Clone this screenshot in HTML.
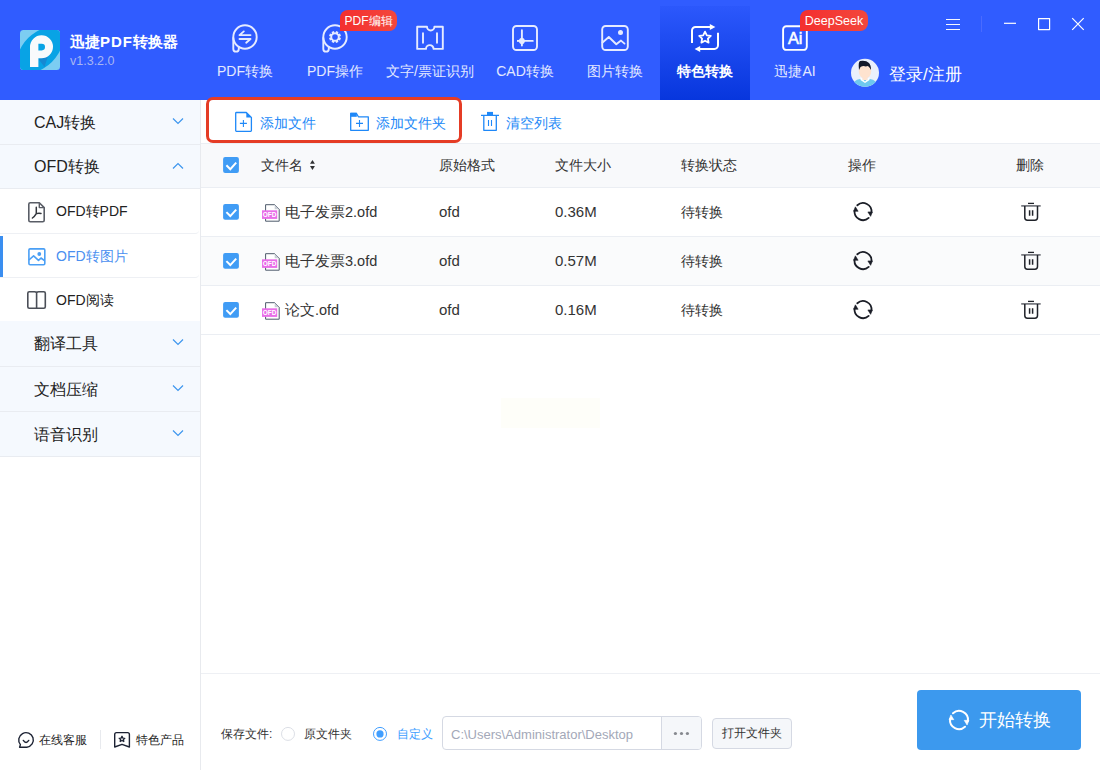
<!DOCTYPE html>
<html><head><meta charset="utf-8">
<style>
*{margin:0;padding:0;box-sizing:border-box}
html,body{width:1100px;height:770px;overflow:hidden;background:#fff;font-family:"Liberation Sans",sans-serif;color:#333}
.abs{position:absolute;white-space:nowrap}
#hdr{position:absolute;left:0;top:0;width:1100px;height:100px;background:#305cff}
.nav{position:absolute;top:0;width:90px;height:100px;text-align:center;color:#e3e9ff;font-size:14px}
.nav .lbl{position:absolute;left:0;width:90px;top:62px;line-height:18px;white-space:nowrap}
.nav svg{position:absolute;top:24px;left:31px}
.badge{position:absolute;height:21px;line-height:21px;border-radius:8px 8px 8px 0;background:linear-gradient(90deg,#f42f2f,#f3473c);color:#fff;font-size:13px;text-align:center;white-space:nowrap}
#side{position:absolute;left:0;top:100px;width:201px;height:670px;background:#fff;border-right:1px solid #e8eaee}
.grp{position:absolute;left:0;width:200px;height:45px;background:#f5f9fe;border-bottom:1px solid #e9ecf1}
.grp .t{position:absolute;left:34px;top:0;line-height:44px;font-size:16px;color:#222}
.grp svg{position:absolute;left:172px;top:17px}
.sub{position:absolute;left:0;width:199px;border-radius:0 4px 4px 0;height:44px;background:#fff;border-bottom:1px solid #eef0f4}
.sub .t{position:absolute;left:56px;top:0;line-height:44px;font-size:14px;color:#222}
.sub svg{position:absolute;left:27px;top:12px}
#main{position:absolute;left:201px;top:100px;width:899px;height:670px;background:#fff}
.th{position:absolute;top:0;line-height:44px;font-size:14px;color:#333}
.row{position:absolute;left:0;width:899px;height:49px;border-bottom:1px solid #ebeef3}
.cell{position:absolute;top:0;line-height:48px;font-size:14px;color:#333;white-space:nowrap}
.cb{position:absolute;left:22px;width:16px;height:16px;background:#4c9bf0;border-radius:2px}
.cb svg{position:absolute;left:0;top:0}
.tb{position:absolute;top:1px;line-height:44px;font-size:14px;color:#2389f7;white-space:nowrap}
</style></head><body>
<div id="hdr">
  
    <div class="abs" style="left:70px;top:32px;color:#fff;font-size:15px;font-weight:bold;line-height:20px">迅捷<span style="letter-spacing:1px">PDF</span>转换器</div>
  <div class="abs" style="left:70px;top:54px;color:#a8b6f2;font-size:12.5px;line-height:14px">v1.3.2.0</div>

  <div class="nav" style="left:200px"><div class="lbl">PDF转换</div></div>
  <div class="nav" style="left:290px"><div class="lbl">PDF操作</div></div>
  <div class="nav" style="left:385px"><div class="lbl">文字/票证识别</div></div>
  <div class="nav" style="left:480px"><div class="lbl">CAD转换</div></div>
  <div class="nav" style="left:570px"><div class="lbl">图片转换</div></div>
  <div class="nav" style="left:660px;top:6px;height:94px;background:linear-gradient(180deg,#2c58fc,#0736dd);color:#fff;font-weight:bold"><div class="lbl" style="top:56px">特色转换</div></div>
  <div class="nav" style="left:750px"><div class="lbl">迅捷AI</div></div>

  <svg class="abs" style="left:0;top:0" width="1100" height="100" viewBox="0 0 1100 100">
    <defs><clipPath id="lc"><rect x="20" y="30" width="40" height="40" rx="3.5"/></clipPath></defs>
    <g clip-path="url(#lc)">
      <rect x="20" y="30" width="40" height="40" fill="#7ccdf2"/>
      <ellipse cx="40" cy="50" rx="27" ry="16.8" transform="rotate(-45 40 50)" fill="#08a3e5"/>
      <path d="M38.4 59 L44.5 67 L48 56 Z" fill="#1689d2"/>
      <path d="M30 66.9 V46.8 A11.5 11.5 0 1 1 41.3 58.3 L38.4 58.3 V66.9 Z" fill="#f8fafc"/>
      <path d="M38.4 43.8 H41.7 A3.3 3.3 0 0 1 41.7 50.4 H38.4 Z" fill="#08a3e5"/>
    </g>
    <g fill="none" stroke="#e6ebff" stroke-width="1.9" stroke-linecap="round" stroke-linejoin="round">
      <!-- PDF转换 bubble -->
      <circle cx="245" cy="37" r="11.7"/>
      <path d="M233.3 38 V48.9 A2.75 2.75 0 0 0 238.8 48.9 V46.6"/>
      <path d="M239.5 35.1 H250.5 M239.5 35.1 L243.8 31.4 M239.5 39 H250.5 M250.5 39 L246.2 42.7"/>
      <!-- PDF操作 bubble -->
      <circle cx="335" cy="37" r="11.7"/>
      <path d="M323.3 38 V48.9 A2.75 2.75 0 0 0 328.8 48.9 V46.6"/>
      <!-- ticket -->
      <path d="M417.2 26.8 H427 A3.7 3.7 0 0 0 434.4 26.8 H442.8 V48.9 H433.6 A3.8 3.8 0 0 0 426 48.9 H417.2 Z"/>
      <path d="M423 33.2 V42.8 M437 33.2 V42.8"/>
      <!-- CAD -->
      <rect x="513" y="26" width="24" height="24" rx="3.5"/>
      <path d="M521.9 30.2 V45.5 M521.9 40.9 H532.8"/>
      <!-- image -->
      <rect x="602.2" y="26" width="25.6" height="24" rx="3.5"/>
      <path d="M602.5 42.5 L608.8 37 L616.3 44.3 L621 40.6 L624.5 43.6"/>
      <!-- AI -->
      <rect x="783.1" y="26.2" width="23.7" height="23.7" rx="3.2" stroke="#fff"/>
      <!-- window controls -->
      <path d="M946 19.5 H960 M946 24.5 H960 M946 29.5 H960" stroke-width="1.1" stroke-linecap="butt" stroke="#f4f6ff"/>
      <path d="M1004 23.3 H1016" stroke-width="1.2" stroke-linecap="butt" stroke="#fff"/>
      <rect x="1038.6" y="18.6" width="11" height="11" stroke-width="1.2" stroke="#fff"/>
      <path d="M1072.2 18.2 L1083.7 29.8 M1083.7 18.2 L1072.2 29.8" stroke-width="1.2" stroke-linecap="butt" stroke="#fff"/>
    </g>
    <!-- gear -->
    <g fill="#e6ebff">
      <path id="gear" d="M335.44 32.42 L336.11 31.00 L338.46 31.97 L337.93 33.45 L338.55 34.07 L340.03 33.54 L341.00 35.89 L339.58 36.56 L339.58 37.44 L341.00 38.11 L340.03 40.46 L338.55 39.93 L337.93 40.55 L338.46 42.03 L336.11 43.00 L335.44 41.58 L334.56 41.58 L333.89 43.00 L331.54 42.03 L332.07 40.55 L331.45 39.93 L329.97 40.46 L329.00 38.11 L330.42 37.44 L330.42 36.56 L329.00 35.89 L329.97 33.54 L331.45 34.07 L332.07 33.45 L331.54 31.97 L333.89 31.00 L334.56 32.42 Z M337.80 37 A2.8 2.8 0 1 0 332.20 37 A2.8 2.8 0 1 0 337.80 37 Z" fill-rule="evenodd"/>
      <circle cx="620.5" cy="32.5" r="2.5"/>
      <path d="M521.9 37.7 L523.2 38.4 L524.9 40.9 L523.2 43.4 L521.9 44.1 L520.6 43.4 L518.9 40.9 L520.6 38.4 Z"/>
      <circle cx="521.9" cy="40.9" r="2.9"/>
      <path d="M517 40.9 H521" stroke="#e6ebff" stroke-width="1.9"/>
    </g>
    <!-- special -->
    <g fill="none" stroke="#fff" stroke-width="2" stroke-linejoin="round">
      <path d="M692 43 V30.5 A3.6 3.6 0 0 1 695.6 26.9 H710.5"/>
      <path d="M718 32.8 V45.3 A3.6 3.6 0 0 1 714.4 48.9 H699.5"/>
      <path d="M705 31.6 L706.8 35.3 L710.8 35.8 L707.9 38.6 L708.6 42.6 L705 40.7 L701.4 42.6 L702.1 38.6 L699.2 35.8 L703.2 35.3 Z" stroke-width="1.8"/>
    </g>
    <g fill="#fff">
      <path d="M709.8 23.9 L715.4 26.9 L709.8 29.9 Z"/>
      <path d="M700.2 45.9 L694.6 48.9 L700.2 51.9 Z"/>
    </g>
    <text x="788" y="43.7" font-family="Liberation Sans" font-size="16.3" fill="#fff" stroke="#fff" stroke-width="0.55">Ai</text>
    <rect x="981" y="16" width="1" height="16" fill="#4a6bfe"/>
    <!-- avatar -->
    <defs><clipPath id="ac"><circle cx="865" cy="72.8" r="14"/></clipPath></defs>
    <circle cx="865" cy="72.8" r="14" fill="#eaf0fc"/>
    <g clip-path="url(#ac)">
      <path d="M851 90 Q852 80 860 79 L870 79 Q878 80 879 90 Z" fill="#6ec8ef"/>
      <path d="M860.5 77 L865 81.5 L869.5 77 L869.5 80 L865 83 L860.5 80 Z" fill="#fff"/>
      <ellipse cx="865" cy="71" rx="6.3" ry="7.5" fill="#fee3cf"/>
      <rect x="862.6" y="75" width="4.8" height="5" fill="#fee3cf"/>
      <path d="M859 70 Q858 62 860 61 Q866 60 869 63 Q871 65 871 70 L869.8 68 Q868 65 866 66.5 Q863 65.5 860.5 67 Z" fill="#13192a"/>
    </g>
  </svg>
  <div class="badge" style="left:340px;top:10px;width:57px;font-size:12px;line-height:23px">PDF编辑</div>
  <div class="badge" style="left:800px;top:10px;width:68px;font-size:12.5px;line-height:23px">DeepSeek</div>

  
  <div class="abs" style="left:889px;top:64.5px;color:#fff;font-size:17px;line-height:20px">登录/注册</div>
</div>

<div id="side">
  <div class="grp" style="top:0;height:45px"><div class="t" style="top:1px">CAJ转换</div><svg width="12" height="8"><path d="M1 1.5L6 6.5L11 1.5" fill="none" stroke="#3d96ee" stroke-width="1.2"/></svg></div>
  <div class="grp" style="top:45px;height:44px"><div class="t" style="top:0px">OFD转换</div><svg width="12" height="8"><path d="M1 6.5L6 1.5L11 6.5" fill="none" stroke="#3d96ee" stroke-width="1.2"/></svg></div>
  <div class="sub" style="top:89px;height:45px"><svg width="18" height="21" style="left:28px;top:13px"><g fill="none" stroke="#595d66" stroke-width="1.6" stroke-linejoin="round"><path d="M0.8 2.3 Q0.8 0.8 2.3 0.8 H11.3 L16.2 5.6 V18.3 Q16.2 19.8 14.7 19.8 H2.3 Q0.8 19.8 0.8 18.3 Z"/><path d="M11.3 0.8 V5.6 H16.2" stroke-width="1.4"/><path d="M8.3 5.2 V11.6 Q6.8 14.2 4.4 16 M8.3 11.6 Q10.6 10.8 13 11.4" stroke="#33363d" stroke-width="1.5" stroke-linecap="round"/></g></svg><div class="t">OFD转PDF</div></div>
  <div class="sub" style="top:134px;height:44px"><svg width="18" height="19" style="left:28px;top:14px"><g fill="none" stroke="#4a9ff5" stroke-width="1.6" stroke-linejoin="round"><rect x="0.9" y="0.9" width="15.9" height="15.9" rx="1.2"/><path d="M0.9 12 L5.6 7.8 L10.5 12.4 L13 10 L16.5 12.6"/></g><circle cx="11.3" cy="6" r="1.9" fill="#4a9ff5"/></svg><div class="t" style="color:#4a8ff0">OFD转图片</div><div class="abs" style="left:0;top:2px;width:3px;height:41px;background:#3a8ef0"></div></div>
  <div class="sub" style="top:178px;height:43px;border-bottom:none;border-radius:0 0 4px 0"><svg width="20" height="19" style="left:27px;top:13px"><g fill="none" stroke="#4a4e57" stroke-width="1.6" stroke-linejoin="round"><path d="M9.6 1.6 Q8.8 0.8 7.5 0.8 H2.3 Q0.8 0.8 0.8 2.3 V15.8 Q0.8 17.3 2.3 17.3 H16.8 Q18.3 17.3 18.3 15.8 V2.3 Q18.3 0.8 16.8 0.8 H11.7 Q10.4 0.8 9.6 1.6 V17.3"/></g></svg><div class="t">OFD阅读</div></div>
  <div class="grp" style="top:221px;height:46px"><div class="t" style="top:1px">翻译工具</div><svg width="12" height="8"><path d="M1 1.5L6 6.5L11 1.5" fill="none" stroke="#3d96ee" stroke-width="1.2"/></svg></div>
  <div class="grp" style="top:267px;height:45px"><div class="t" style="top:1px">文档压缩</div><svg width="12" height="8"><path d="M1 1.5L6 6.5L11 1.5" fill="none" stroke="#3d96ee" stroke-width="1.2"/></svg></div>
  <div class="grp" style="top:312px;height:45px"><div class="t" style="top:1px">语音识别</div><svg width="12" height="8"><path d="M1 1.5L6 6.5L11 1.5" fill="none" stroke="#3d96ee" stroke-width="1.2"/></svg></div>

  <div class="abs" style="left:39px;top:632px;font-size:12px;line-height:16px;color:#222">在线客服</div>
  <div class="abs" style="left:100px;top:630px;width:1px;height:19px;background:#e8eaee"></div>
  <div class="abs" style="left:136px;top:632px;font-size:12px;line-height:16px;color:#222">特色产品</div>
</div>

<div id="main">
  <div class="tb" style="left:59px">添加文件</div>
  <div class="tb" style="left:175px">添加文件夹</div>
  <div class="tb" style="left:305px">清空列表</div>
  <div class="abs" style="left:5px;top:-3px;width:255.5px;height:45.5px;border:3.3px solid #e53c25;border-radius:7px"></div>

  <div class="abs" style="left:0;top:43px;width:899px;height:45px;background:#f8f9fb;border-top:1px solid #ebeef3;border-bottom:1px solid #ebeef3"></div>
  <div class="th" style="top:43px;left:60px">文件名</div>
  <div class="th" style="top:43px;left:238px">原始格式</div>
  <div class="th" style="top:43px;left:354px">文件大小</div>
  <div class="th" style="top:43px;left:480px">转换状态</div>
  <div class="th" style="top:43px;left:647px">操作</div>
  <div class="th" style="top:43px;left:815px">删除</div>
  

  <div class="row" style="top:88px"><div class="cell" style="left:84px;font-size:14.5px">电子发票2.ofd</div><div class="cell" style="left:238px;font-size:15px">ofd</div><div class="cell" style="left:354px;font-size:15px">0.36M</div><div class="cell" style="left:480px">待转换</div></div>
  <div class="row" style="top:137px;background:#fafbfc"><div class="cell" style="left:84px;font-size:14.5px">电子发票3.ofd</div><div class="cell" style="left:238px;font-size:15px">ofd</div><div class="cell" style="left:354px;font-size:15px">0.57M</div><div class="cell" style="left:480px">待转换</div></div>
  <div class="row" style="top:186px"><div class="cell" style="left:84px;font-size:14.5px">论文.ofd</div><div class="cell" style="left:238px;font-size:15px">ofd</div><div class="cell" style="left:354px;font-size:15px">0.16M</div><div class="cell" style="left:480px">待转换</div></div>

  <div class="abs" style="left:0;top:573px;width:899px;height:1px;background:#eef0f4"></div>
  <div class="abs" style="left:300px;top:298px;width:99px;height:30px;background:#fefef9"></div>
  <div class="abs" style="left:20px;top:626px;font-size:12px;line-height:16px;color:#333">保存文件:</div>
  <div class="abs" style="left:103px;top:626px;font-size:12px;line-height:16px;color:#333">原文件夹</div>
  <div class="abs" style="left:196px;top:626px;font-size:12px;line-height:16px;color:#409eff">自定义</div>
  <div class="abs" style="left:241px;top:616px;width:260px;height:34px;border:1px solid #d5d9e3;border-radius:4px;background:#fff"></div>
  <div class="abs" style="left:250px;top:626.5px;font-size:13px;line-height:16px;color:#a3a8b8">C:\Users\Administrator\Desktop</div>
  <div class="abs" style="left:460px;top:617px;width:40px;height:32px;background:#f5f7fa;border-left:1px solid #d5d9e3;border-radius:0 3px 3px 0"></div>
  <div class="abs" style="left:511px;top:618px;width:80px;height:31px;border:1px solid #d5d9e3;border-radius:4px;background:#f5f7fa"></div>
  <div class="abs" style="left:521px;top:625px;font-size:12px;line-height:16px;color:#333">打开文件夹</div>
  <div class="abs" style="left:716px;top:590px;width:164px;height:60px;background:#3c99ee;border-radius:4px"></div>
  <div class="abs" style="left:778px;top:609px;font-size:18px;line-height:22px;color:#fff">开始转换</div>
</div>
<svg id="ov" class="abs" style="left:0;top:0;pointer-events:none" width="1100" height="770" viewBox="0 0 1100 770">
<g fill="none" stroke="#1e88f8" stroke-width="1.3" stroke-linejoin="round">
<path d="M235.7 113.2 Q235.7 112.5 236.4 112.5 H246.3 L251.4 117.4 V130.6 Q251.4 131.3 250.7 131.3 H236.4 Q235.7 131.3 235.7 130.6 Z"/>
<path d="M239.9 123.4 H246.9 M243.4 119.9 V126.9" stroke-width="1.1"/>
<path d="M350.7 113.5 H356.5 L358.4 116.8 H368.3 V130.3 H350.7 Z"/>
<path d="M356 123.4 H363 M359.5 119.9 V126.9" stroke-width="1.1"/>
<path d="M481 115.4 H499 M483.8 115.4 V130.3 H496.3 V115.4"/>
<path d="M488.5 120 V126 M491.5 120 V126" stroke-width="1.1"/>
</g>
<g fill="#1e88f8">
<path d="M246.3 112.5 L251.4 117.4 H246.3 Z"/>
<rect x="350.4" y="112.8" width="6.4" height="4"/>
<rect x="487" y="111.9" width="6" height="3.5"/>
</g>
<g fill="#303133"><path d="M312.45 159.9 L314.9 163.8 H310 Z"/><path d="M312.45 169.9 L314.9 166 H310 Z"/></g>
<rect x="223.1" y="157.05" width="15.8" height="15.9" rx="2" fill="#409cf5"/>
<path d="M226.4 165.30 L230.3 169.20 L236.2 162.70" fill="none" stroke="#fff" stroke-width="2"/>
<rect x="223.1" y="203.90" width="15.8" height="15.9" rx="2" fill="#409cf5"/>
<path d="M226.4 212.15 L230.3 216.05 L236.2 209.55" fill="none" stroke="#fff" stroke-width="2"/>
<rect x="223.1" y="252.90" width="15.8" height="15.9" rx="2" fill="#409cf5"/>
<path d="M226.4 261.15 L230.3 265.05 L236.2 258.55" fill="none" stroke="#fff" stroke-width="2"/>
<rect x="223.1" y="301.90" width="15.8" height="15.9" rx="2" fill="#409cf5"/>
<path d="M226.4 310.15 L230.3 314.05 L236.2 307.55" fill="none" stroke="#fff" stroke-width="2"/>
<g transform="translate(0 0.00)">
<path d="M265.6 204.7 H274.7 L279.2 209.2 V221.2 H265.6 Z" fill="#fff" stroke="#4e5a6b" stroke-width="1"/>
<path d="M274.7 204.7 V209.2 H279.2 Z" fill="#c9ced6"/>
<rect x="262" y="210.3" width="15.2" height="8.6" fill="#e96ee9"/>
<text x="269.6" y="217.3" font-family="Liberation Sans" font-size="6.5" font-weight="bold" fill="#fff" text-anchor="middle">OFD</text>
</g>
<path d="M857.31 205.28 A8.5 8.5 0 0 1 871.45 212.49 M868.69 217.92 A8.5 8.5 0 0 1 854.55 210.71" fill="none" stroke="#1a1d26" stroke-width="1.8" stroke-linecap="round"/>
<path d="M872.39 211.93 L867.89 211.94 L870.63 216.37 Z" fill="#1a1d26" stroke="#1a1d26" stroke-width="0.6" stroke-linejoin="round"/>
<path d="M853.61 211.27 L858.11 211.26 L855.37 206.83 Z" fill="#1a1d26" stroke="#1a1d26" stroke-width="0.6" stroke-linejoin="round"/>
<g transform="translate(0 0.00)" fill="none" stroke="#1f2229" stroke-linejoin="round">
<path d="M1028 203.4 H1034" stroke-width="1.3"/>
<path d="M1021.2 205.9 H1040.7" stroke-width="1.6" stroke="#6b6e75"/>
<path d="M1024.8 206 V217.6 Q1024.8 220.2 1027.4 220.2 H1034.9 Q1037.5 220.2 1037.5 217.6 V206" stroke-width="1.5"/>
<path d="M1029.6 210.3 V215.7 M1032.6 210.3 V215.7" stroke-width="1.5"/>
</g>
<g transform="translate(0 49.00)">
<path d="M265.6 204.7 H274.7 L279.2 209.2 V221.2 H265.6 Z" fill="#fff" stroke="#4e5a6b" stroke-width="1"/>
<path d="M274.7 204.7 V209.2 H279.2 Z" fill="#c9ced6"/>
<rect x="262" y="210.3" width="15.2" height="8.6" fill="#e96ee9"/>
<text x="269.6" y="217.3" font-family="Liberation Sans" font-size="6.5" font-weight="bold" fill="#fff" text-anchor="middle">OFD</text>
</g>
<path d="M857.31 254.28 A8.5 8.5 0 0 1 871.45 261.49 M868.69 266.92 A8.5 8.5 0 0 1 854.55 259.71" fill="none" stroke="#1a1d26" stroke-width="1.8" stroke-linecap="round"/>
<path d="M872.39 260.93 L867.89 260.94 L870.63 265.37 Z" fill="#1a1d26" stroke="#1a1d26" stroke-width="0.6" stroke-linejoin="round"/>
<path d="M853.61 260.27 L858.11 260.26 L855.37 255.83 Z" fill="#1a1d26" stroke="#1a1d26" stroke-width="0.6" stroke-linejoin="round"/>
<g transform="translate(0 49.00)" fill="none" stroke="#1f2229" stroke-linejoin="round">
<path d="M1028 203.4 H1034" stroke-width="1.3"/>
<path d="M1021.2 205.9 H1040.7" stroke-width="1.6" stroke="#6b6e75"/>
<path d="M1024.8 206 V217.6 Q1024.8 220.2 1027.4 220.2 H1034.9 Q1037.5 220.2 1037.5 217.6 V206" stroke-width="1.5"/>
<path d="M1029.6 210.3 V215.7 M1032.6 210.3 V215.7" stroke-width="1.5"/>
</g>
<g transform="translate(0 98.00)">
<path d="M265.6 204.7 H274.7 L279.2 209.2 V221.2 H265.6 Z" fill="#fff" stroke="#4e5a6b" stroke-width="1"/>
<path d="M274.7 204.7 V209.2 H279.2 Z" fill="#c9ced6"/>
<rect x="262" y="210.3" width="15.2" height="8.6" fill="#e96ee9"/>
<text x="269.6" y="217.3" font-family="Liberation Sans" font-size="6.5" font-weight="bold" fill="#fff" text-anchor="middle">OFD</text>
</g>
<path d="M857.31 303.28 A8.5 8.5 0 0 1 871.45 310.49 M868.69 315.92 A8.5 8.5 0 0 1 854.55 308.71" fill="none" stroke="#1a1d26" stroke-width="1.8" stroke-linecap="round"/>
<path d="M872.39 309.93 L867.89 309.94 L870.63 314.37 Z" fill="#1a1d26" stroke="#1a1d26" stroke-width="0.6" stroke-linejoin="round"/>
<path d="M853.61 309.27 L858.11 309.26 L855.37 304.83 Z" fill="#1a1d26" stroke="#1a1d26" stroke-width="0.6" stroke-linejoin="round"/>
<g transform="translate(0 98.00)" fill="none" stroke="#1f2229" stroke-linejoin="round">
<path d="M1028 203.4 H1034" stroke-width="1.3"/>
<path d="M1021.2 205.9 H1040.7" stroke-width="1.6" stroke="#6b6e75"/>
<path d="M1024.8 206 V217.6 Q1024.8 220.2 1027.4 220.2 H1034.9 Q1037.5 220.2 1037.5 217.6 V206" stroke-width="1.5"/>
<path d="M1029.6 210.3 V215.7 M1032.6 210.3 V215.7" stroke-width="1.5"/>
</g>
<circle cx="288" cy="733.9" r="6.5" fill="#fff" stroke="#dcdfe6" stroke-width="1"/>
<circle cx="380" cy="733.9" r="6.5" fill="#fff" stroke="#409eff" stroke-width="1"/><circle cx="380" cy="733.9" r="3.6" fill="#409eff"/>
<g fill="#86898f"><circle cx="675.4" cy="733.5" r="1.6"/><circle cx="681.5" cy="733.5" r="1.6"/><circle cx="687.4" cy="733.5" r="1.6"/></g>
<path d="M952.98 713.31 A9 9 0 0 1 967.95 720.94 M965.02 726.69 A9 9 0 0 1 950.05 719.06" fill="none" stroke="#fff" stroke-width="2" stroke-linecap="round"/>
<path d="M968.95 720.35 L964.18 720.36 L967.08 725.05 Z" fill="#fff" stroke="#fff" stroke-width="0.6" stroke-linejoin="round"/>
<path d="M949.05 719.65 L953.82 719.64 L950.92 714.95 Z" fill="#fff" stroke="#fff" stroke-width="0.6" stroke-linejoin="round"/>
<g fill="none" stroke="#1c2233" stroke-width="1.4" stroke-linejoin="round" stroke-linecap="round">
<path d="M20.4 744.6 A7.3 7.3 0 1 1 26.8 747.2 H19.6 Z"/>
<path d="M23.3 740.4 Q26 744.6 28.75 740.4"/>
<path d="M114.7 734.4 Q114.7 732.6 116.5 732.6 H127.6 Q129.4 732.6 129.4 734.4 V747 L122 744.3 L114.7 747 Z"/>
<path d="M122 736.3 L122.9 738.1 L124.8 738.3 L123.4 739.6 L123.8 741.5 L122 740.5 L120.2 741.5 L120.6 739.6 L119.2 738.3 L121.1 738.1 Z" stroke-width="1.3"/>
</g>
</svg>
</body></html>
